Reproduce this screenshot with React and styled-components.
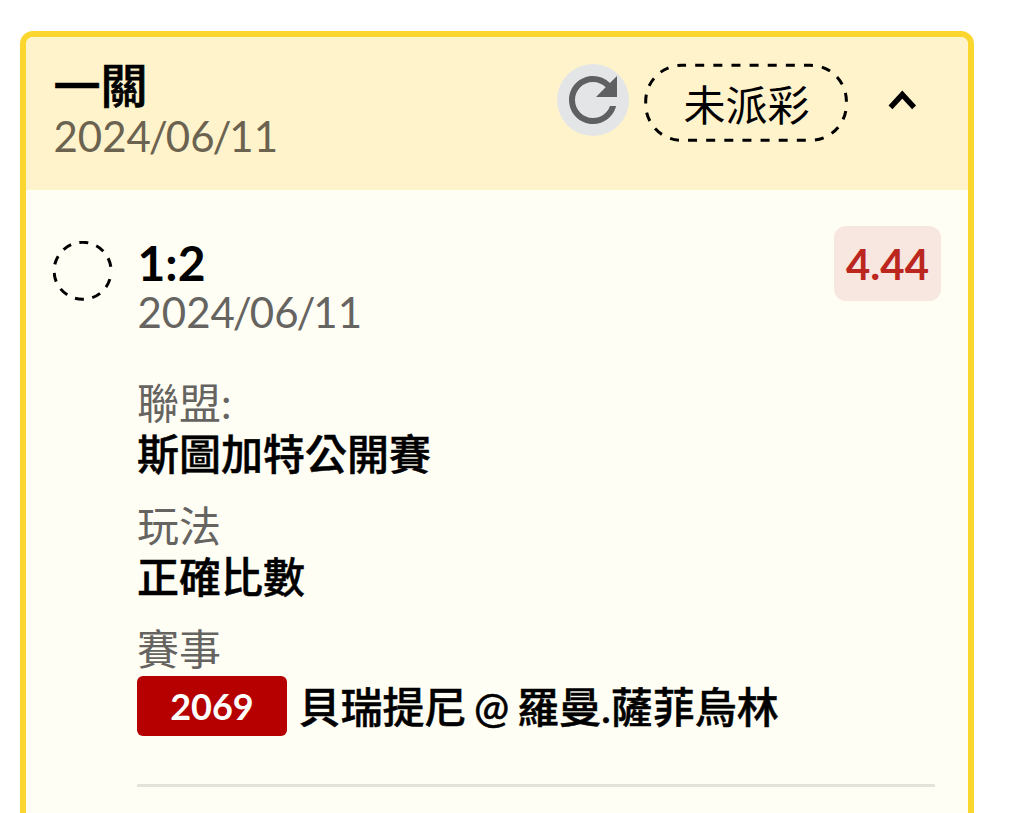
import React from "react";
import { MdRefresh } from "react-icons/md";
import styled, { createGlobalStyle } from "styled-components";

const GlobalStyle = createGlobalStyle`
  * {
    box-sizing: border-box;
  }
  body {
    margin: 0;
    background: #fff;
    color: #000;
    font-family: Lato, "Noto Sans CJK TC", sans-serif;
    font-size: 42px;
    line-height: 50px;
  }
`;

const Page = styled.div`
  height: 813px;
  padding: 31px 43px 0 20px;
  overflow: hidden;
`;

const Card = styled.section`
  height: 860px;
  border: 6px solid #fbd62e;
  border-radius: 13px;
  background: #fffef5;
  overflow: hidden;
`;

const Header = styled.header`
  display: flex;
  align-items: flex-start;
  height: 153px;
  padding: 26px 43px 0 28px;
  background: #fff3cc;
`;

const Heading = styled.div`
  display: flex;
  flex: 1;
  flex-direction: column;
  gap: 2px;
  margin: -2px 0 0 -0.5px;
`;

const Title = styled.div`
  font-size: 48px;
  line-height: 48px;
  font-weight: 700;
`;

const HeaderTitle = styled(Title)`
  font-size: 47px;
  font-weight: 500;
  -webkit-text-stroke: 0.7px #000;
`;

const DateText = styled.div`
  color: ${({ color }) => color || "#666460"};
`;

/* pulls the slash in between its neighbouring digits */
const Tight = styled.span`
  letter-spacing: -2.1px;
`;

const RefreshButton = styled.button`
  display: flex;
  width: 72px;
  height: 72px;
  margin: 1px 15px 0 0;
  padding: 0;
  border: 0;
  border-radius: 50%;
  background: #e4e5e7;
  color: #5f6062;
  font-size: 72px;
`;

const Status = styled.div`
  position: relative;
  width: 205px;
  height: 78px;
  margin-right: 31px;
  line-height: 84px;
  text-align: center;
`;

const StatusOutline = styled.svg`
  position: absolute;
  top: 0;
  left: 0;
`;

const Chevron = styled.svg`
  width: 45px;
  height: 40px;
  margin-top: 17px;
`;

const Bet = styled.div`
  display: grid;
  grid-template-columns: 84px 1fr;
  padding: 36px 27px 0 27px;
`;

const Pending = styled.svg`
  width: 60px;
  height: 60px;
  margin-top: 15px;
`;

const BetTop = styled.div`
  display: flex;
  justify-content: space-between;
  align-items: flex-start;
  height: 152px;
`;

const BetHeading = styled.div`
  padding: 13px 0 0 0.5px;
`;

const Odds = styled.span`
  width: 107px;
  height: 75px;
  border-radius: 12px;
  background: #f8e6e0;
  color: #bb271e;
  font-weight: 700;
  line-height: 77px;
  text-align: center;
`;

const Field = styled.div`
  height: 123px;
`;

const Label = styled.div`
  color: #666460;
  line-height: 51px;
`;

const Value = styled.div`
  display: flex;
  align-items: flex-start;
  gap: 11.5px;
  padding-top: ${({ $tall }) => ($tall ? 1 : 0)}px;
  font-weight: 500;
  line-height: ${({ $tall }) => ($tall ? 63 : 50)}px;
  word-spacing: -3px;
  -webkit-text-stroke: 0.5px #000;
`;

const Code = styled.span`
  width: 150px;
  height: 60px;
  border-radius: 6px;
  background: #b60000;
  color: #fff;
  font-size: 36px;
  font-weight: 700;
  line-height: 60px;
  text-align: center;
  -webkit-text-stroke: 0;
`;

const Divider = styled.hr`
  height: 3px;
  margin: 37px 6px 0 0;
  border: 0;
  background: #e4e2db;
`;

const FIELDS = [
  { label: "聯盟:", value: "斯圖加特公開賽" },
  { label: "玩法", value: "正確比數" },
  { label: "賽事", value: "貝瑞提尼 @ 羅曼.薩菲烏林", code: "2069" },
];

const BetDate = ({ value, color }) => (
  <DateText color={color}>
    {value
      .split(/(\d\/)/)
      .map((part, id) =>
        part.endsWith("/") ? <Tight key={id}>{part}</Tight> : part
      )}
  </DateText>
);

const App = () => {
  return (
    <Page>
      <GlobalStyle />
      <Card>
        <Header>
          <Heading>
            <HeaderTitle>一關</HeaderTitle>
            <BetDate value="2024/06/11" color="#6b6350" />
          </Heading>
          <RefreshButton type="button" aria-label="refresh">
            <MdRefresh />
          </RefreshButton>
          <Status>
            <StatusOutline width="205" height="80" fill="none">
              <rect
                x="1.7"
                y="2.3"
                width="200.7"
                height="75"
                rx="36"
                stroke="#000"
                strokeWidth="3"
                strokeDasharray="9 9.13"
                strokeDashoffset="-13.5"
              />
            </StatusOutline>
            未派彩
          </Status>
          <Chevron viewBox="0 0 45 40">
            <path
              d="M10.5 27.4 22.3 14.6 34.1 27.4"
              fill="none"
              stroke="#000"
              strokeWidth="5.4"
            />
          </Chevron>
        </Header>
        <Bet>
          <Pending viewBox="0 0 60 60">
            <circle
              cx="29.6"
              cy="29.8"
              r="28.5"
              pathLength="360"
              fill="none"
              stroke="#000"
              strokeWidth="3"
              strokeDasharray={`${"18 17.2 ".repeat(9)}18 25.2`}
              transform="rotate(17 29.6 29.8)"
            />
          </Pending>
          <div>
            <BetTop>
              <BetHeading>
                <Title>1:2</Title>
                <BetDate value="2024/06/11" />
              </BetHeading>
              <Odds>4.44</Odds>
            </BetTop>
            {FIELDS.map((e) => (
              <Field key={e.label}>
                <Label>{e.label}</Label>
                <Value $tall={!!e.code}>
                  {e.code && <Code>{e.code}</Code>}
                  <span>{e.value}</span>
                </Value>
              </Field>
            ))}
            <Divider />
          </div>
        </Bet>
      </Card>
    </Page>
  );
};

export default App;
